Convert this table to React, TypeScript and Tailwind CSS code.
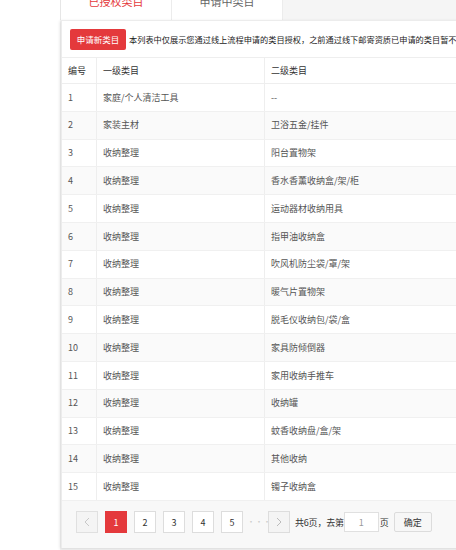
import React from "react";

const rows: [string, string][] = [
  ["家庭/个人清洁工具", "--"],
  ["家装主材", "卫浴五金/挂件"],
  ["收纳整理", "阳台置物架"],
  ["收纳整理", "香水香薰收纳盒/架/柜"],
  ["收纳整理", "运动器材收纳用具"],
  ["收纳整理", "指甲油收纳盒"],
  ["收纳整理", "吹风机防尘袋/罩/架"],
  ["收纳整理", "暖气片置物架"],
  ["收纳整理", "脱毛仪收纳包/袋/盒"],
  ["收纳整理", "家具防倾倒器"],
  ["收纳整理", "家用收纳手推车"],
  ["收纳整理", "收纳罐"],
  ["收纳整理", "蚊香收纳盘/盒/架"],
  ["收纳整理", "其他收纳"],
  ["收纳整理", "镯子收纳盒"],
];

const font = { fontFamily: '"Noto Sans CJK SC", "Noto Sans", sans-serif' };

export default function App() {
  return (
    <div className="w-[456px] h-[550px] bg-white overflow-hidden flex" style={font}>
      <div className="w-[60px] shrink-0 bg-white" />
      <div className="flex-1 bg-[#f5f5f5] flex flex-col min-w-0">
        <div className="flex h-[40px] -mt-[20px] shrink-0">
          <div className="w-[111px] bg-white border-l border-[#e6e6e6] flex items-center justify-center pt-[3px] text-[11px] text-[#e4393c]">
            已授权类目
          </div>
          <div className="w-[112px] bg-white border-l border-r border-[#ececec] flex items-center justify-center pt-[3px] text-[11px] text-[#666]">
            申请中类目
          </div>
        </div>
        <div className="w-[400px] bg-white border-t border-l border-[#ececec] shadow-[-1px_1px_3px_rgba(0,0,0,0.12)] flex flex-col h-[528px] ml-[1px]">
          <div className="flex items-center h-[36px] pl-[8px] pt-[1px] shrink-0">
            <div className="w-[56px] h-[21px] bg-[#e4393c] rounded-[2px] text-white text-[8.5px] flex items-center justify-center shrink-0">
              申请新类目
            </div>
            <div className="ml-[3px] text-[8.2px] text-[#222] whitespace-nowrap">
              本列表中仅展示您通过线上流程申请的类目授权，之前通过线下邮寄资质已申请的类目暂不
            </div>
          </div>
          <div className="border-t border-[#eeeeee]">
            <div className="flex h-[26px] border-b border-[#eeeeee] text-[9px] text-[#333]">
              <div className="w-[35px] pl-[6px] flex items-center border-r border-[#eeeeee]">编号</div>
              <div className="w-[168px] pl-[6px] flex items-center border-r border-[#eeeeee]">一级类目</div>
              <div className="flex-1 pl-[6px] flex items-center">二级类目</div>
            </div>
            {rows.map((r, i) => (
              <div
                key={i}
                className={
                  "flex h-[27.8px] border-b border-[#f0f0f0] text-[9px] text-[#555] " +
                  (i % 2 === 1 ? "bg-[#fafafa]" : "bg-white")
                }
              >
                <div className="w-[35px] pl-[6px] flex items-center border-r border-[#eeeeee]">{i + 1}</div>
                <div className="w-[168px] pl-[6px] flex items-center border-r border-[#eeeeee]">{r[0]}</div>
                <div className="flex-1 pl-[6px] flex items-center">{r[1]}</div>
              </div>
            ))}
          </div>
          <div className="flex-1 bg-[#f8f8f8] flex items-center pl-[14px] pb-[4px]">
            <div className="w-[22px] h-[22px] border border-[#e0e0e0] bg-[#f4f4f4] flex items-center justify-center">
              <svg width="6" height="10" viewBox="0 0 6 10"><path d="M5 1L1 5l4 4" fill="none" stroke="#c8c8c8" strokeWidth="1" /></svg>
            </div>
            <div className="ml-[7px] w-[22px] h-[22px] bg-[#e4393c] text-white text-[9px] flex items-center justify-center">1</div>
            {["2", "3", "4", "5"].map((p) => (
              <div key={p} className="ml-[7px] w-[22px] h-[22px] border border-[#dddddd] bg-white text-[#333] text-[9px] flex items-center justify-center">
                {p}
              </div>
            ))}
            <div className="ml-[7px] w-[18px] text-[#ccc] text-[8px] flex items-center justify-center">···</div>
            <div className="w-[22px] h-[22px] border border-[#dddddd] bg-[#f4f4f4] flex items-center justify-center">
              <svg width="6" height="10" viewBox="0 0 6 10"><path d="M1 1l4 4-4 4" fill="none" stroke="#bbbbbb" strokeWidth="1" /></svg>
            </div>
            <div className="ml-[5px] text-[9px] text-[#333] whitespace-nowrap tracking-[-0.2px]">共6页，去第</div>
            <div className="w-[35px] h-[20px] border border-[#e0e0e0] bg-white text-[9px] text-[#999] flex items-center justify-center">1</div>
            <div className="ml-[1px] text-[9px] text-[#333]">页</div>
            <div className="ml-[5px] w-[38px] h-[20px] border border-[#dcdcdc] bg-[#f7f7f7] rounded-[2px] text-[9px] text-[#333] flex items-center justify-center">确定</div>
          </div>
        </div>
      </div>
    </div>
  );
}
